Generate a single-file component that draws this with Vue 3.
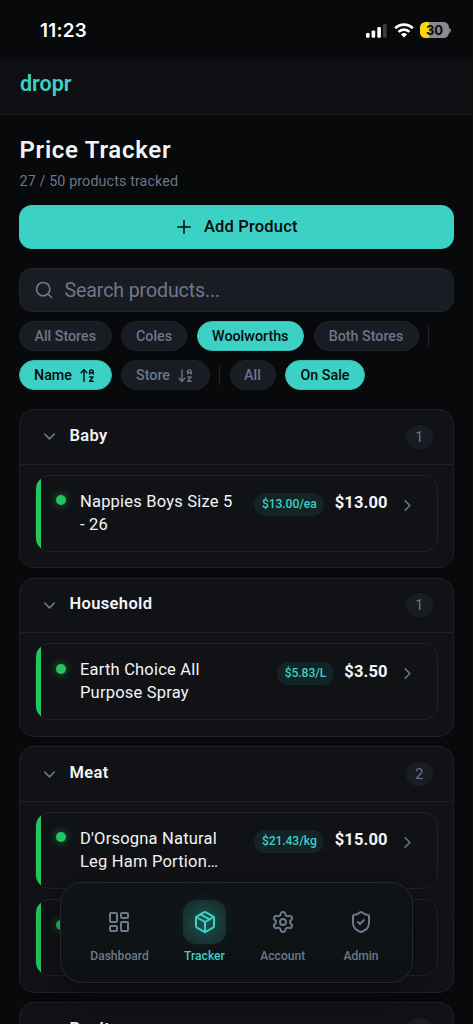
<script setup>
const arrowAZ = {
  up: ['m3 8 4-4 4 4', 'M7 4v16'],
  down: ['m3 16 4 4 4-4', 'M7 20V4'],
}
const letters = ['M20 8h-5', 'M15 10V6.5a2.5 2.5 0 0 1 5 0V10', 'M15 14h5l-5 6h5']

const storeFilters = [
  { label: 'All Stores', cls: 'w-all-stores' },
  { label: 'Coles', cls: 'w-coles' },
  { label: 'Woolworths', cls: 'w-wool', active: true },
  { label: 'Both Stores', cls: 'w-both' },
]

const groups = [
  { name: 'Baby', count: 1, items: [{ lines: ['Nappies Boys Size 5', '- 26'], unit: '$13.00/ea', price: '$13.00' }] },
  { name: 'Household', count: 1, items: [{ lines: ['Earth Choice All', 'Purpose Spray'], unit: '$5.83/L', price: '$3.50' }] },
  {
    name: 'Meat',
    count: 2,
    items: [
      { lines: ["D'Orsogna Natural", 'Leg Ham Portion…'], unit: '$21.43/kg', price: '$15.00' },
      { lines: ['', ''], unit: '', price: '' },
    ],
  },
  { name: 'Poultry', count: 3, items: [] },
]

const tabs = [
  {
    label: 'Dashboard',
    paths: ['M4 3h5a1 1 0 0 1 1 1v7a1 1 0 0 1-1 1H4a1 1 0 0 1-1-1V4a1 1 0 0 1 1-1z', 'M15 3h5a1 1 0 0 1 1 1v3a1 1 0 0 1-1 1h-5a1 1 0 0 1-1-1V4a1 1 0 0 1 1-1z', 'M15 12h5a1 1 0 0 1 1 1v7a1 1 0 0 1-1 1h-5a1 1 0 0 1-1-1v-7a1 1 0 0 1 1-1z', 'M4 16h5a1 1 0 0 1 1 1v3a1 1 0 0 1-1 1H4a1 1 0 0 1-1-1v-3a1 1 0 0 1 1-1z'],
  },
  {
    label: 'Tracker',
    active: true,
    paths: ['M11 21.73a2 2 0 0 0 2 0l7-4A2 2 0 0 0 21 16V8a2 2 0 0 0-1-1.73l-7-4a2 2 0 0 0-2 0l-7 4A2 2 0 0 0 3 8v8a2 2 0 0 0 1 1.73z', 'M12 22V12', 'm3.3 7 8.7 5 8.7-5', 'm7.5 4.27 9 5.15'],
  },
  {
    label: 'Account',
    paths: ['M9.671 4.136a2.34 2.34 0 0 1 4.659 0 2.34 2.34 0 0 0 3.319 1.915 2.34 2.34 0 0 1 2.33 4.033 2.34 2.34 0 0 0 0 3.831 2.34 2.34 0 0 1-2.33 4.033 2.34 2.34 0 0 0-3.319 1.915 2.34 2.34 0 0 1-4.659 0 2.34 2.34 0 0 0-3.32-1.915 2.34 2.34 0 0 1-2.33-4.033 2.34 2.34 0 0 0 0-3.831A2.34 2.34 0 0 1 6.35 6.051a2.34 2.34 0 0 0 3.319-1.915', 'M15 12a3 3 0 1 1-6 0 3 3 0 0 1 6 0z'],
  },
  {
    label: 'Admin',
    paths: ['M20 13c0 5-3.5 7.5-7.66 8.95a1 1 0 0 1-.67-.01C7.5 20.5 4 18 4 13V6a1 1 0 0 1 1-1c2 0 4.5-1.2 6.24-2.72a1.17 1.17 0 0 1 1.52 0C14.51 3.81 17 5 19 5a1 1 0 0 1 1 1z', 'm9 12 2 2 4-4'],
  },
]
</script>

<template>
  <div class="screen">
    <div class="status">
      <span class="time">11:23</span>
      <div class="status-icons">
        <svg class="signal" width="21" height="15" viewBox="0 0 21 15">
          <rect x="0" y="10" width="3.6" height="4.8" rx="1" fill="#fff" />
          <rect x="5.6" y="7.6" width="3.6" height="7.2" rx="1" fill="#fff" />
          <rect x="11.3" y="4" width="3.6" height="10.8" rx="1" fill="#fff" />
          <rect x="17" y="1" width="3.6" height="13.8" rx="1" fill="#3d3e40" />
        </svg>
        <svg class="wifi" width="20" height="15" viewBox="0 0 20 15" fill="none" stroke="#fff" stroke-width="2.7">
          <path d="M1.2 5.3a12.6 12.6 0 0 1 17.6 0" />
          <path d="M4.5 8.9a7.9 7.9 0 0 1 11 0" />
          <path d="M10 14.6 7 11.5a4.3 4.3 0 0 1 6 0z" fill="#fff" stroke="none" />
        </svg>
        <div class="battery"><span>30</span></div>
        <i class="battery-tip"></i>
      </div>
    </div>

    <header class="topbar"><span class="logo">dropr</span></header>

    <main class="content">
      <h1>Price Tracker</h1>
      <p class="sub">27 / 50 products tracked</p>

      <button class="add">
        <svg class="ico" width="18" height="18" viewBox="0 0 24 24"><path d="M3.7 12h16.6M12 3.7v16.6" /></svg>
        <span>Add Product</span>
      </button>

      <div class="search">
        <svg class="ico" width="20" height="20" viewBox="0 0 24 24"><circle cx="11" cy="11" r="8" /><path d="m21 21-4.3-4.3" /></svg>
        <span>Search products...</span>
      </div>

      <div class="chips">
        <span v-for="f in storeFilters" :key="f.label" class="chip" :class="[f.cls, { active: f.active }]">{{ f.label }}</span>
        <i class="sep"></i>
      </div>
      <div class="chips second">
        <span class="chip sort w-name active">Name
          <svg class="ico" width="17" height="17" viewBox="0 0 24 24"><path v-for="d in [...arrowAZ.up, ...letters]" :key="d" :d="d" /></svg>
        </span>
        <span class="chip sort w-store">Store
          <svg class="ico" width="17" height="17" viewBox="0 0 24 24"><path v-for="d in [...arrowAZ.down, ...letters]" :key="d" :d="d" /></svg>
        </span>
        <i class="sep"></i>
        <span class="chip w-any">All</span>
        <span class="chip w-sale active">On Sale</span>
      </div>

      <section v-for="g in groups" :key="g.name" class="card">
        <div class="card-head">
          <svg class="ico chev" width="19" height="19" viewBox="0 0 24 24"><path d="m6 9 6 6 6-6" /></svg>
          <h2>{{ g.name }}</h2>
          <span class="count">{{ g.count }}</span>
        </div>
        <div class="items">
          <article v-for="(it, i) in g.items" :key="i" class="item">
            <i class="dot"></i>
            <div class="name"><div v-for="(l, n) in it.lines" :key="n">{{ l }}</div></div>
            <span v-if="it.unit" class="unit">{{ it.unit }}</span>
            <span v-if="it.price" class="price">{{ it.price }}</span>
            <svg v-if="it.price" class="ico go" width="19" height="19" viewBox="0 0 24 24"><path d="m9 6 6 6-6 6" /></svg>
          </article>
        </div>
      </section>
    </main>

    <nav class="tabbar">
      <div v-for="t in tabs" :key="t.label" class="tab" :class="{ on: t.active }">
        <div class="tab-icon">
          <svg class="ico" width="24" height="24" viewBox="0 0 24 24"><path v-for="d in t.paths" :key="d" :d="d" /></svg>
        </div>
        <span>{{ t.label }}</span>
      </div>
    </nav>
  </div>
</template>

<style>
body {
  background: #08090b;
}
</style>

<style scoped>
.screen {
  position: relative;
  width: 473px;
  height: 1024px;
  overflow: hidden;
  background: #08090b;
  color: #f4f4f6;
  font-family: Roboto, "Liberation Sans", sans-serif;
  box-sizing: border-box;
}
.screen *,
.screen *::before {
  box-sizing: border-box;
}
.ico {
  flex: none;
  display: block;
  fill: none;
  stroke: currentColor;
  stroke-width: 2;
  stroke-linecap: round;
  stroke-linejoin: round;
}
.status {
  height: 57px;
  display: flex;
  justify-content: space-between;
  align-items: center;
  padding: 3px 22px 0 40px;
}
.time {
  margin-top: 2px;
  font: 600 18.8px/22px Inter, sans-serif;
  letter-spacing: 0.3px;
  color: #fff;
}
.status-icons {
  display: flex;
  align-items: center;
}
.wifi {
  margin: 0 6.5px 0 6.5px;
}
.battery {
  width: 29px;
  height: 16px;
  border-radius: 5.5px;
  background: linear-gradient(90deg, #ffd60a 0 9px, #8a8b8d 9px);
  color: #08090b;
  font: 700 13px/16px Inter, sans-serif;
  text-align: center;
}
.battery-tip {
  width: 2px;
  height: 5px;
  border-radius: 0 2px 2px 0;
  background: #77787a;
}
.topbar {
  height: 58px;
  background: #0e0f12;
  border-bottom: 1px solid #1f2024;
  padding: 14px 20px 0;
}
.logo {
  display: block;
  font-size: 21.5px;
  font-weight: 600;
  line-height: 26px;
  color: #3bd1c4;
}
.content {
  padding: 0 19.5px 0 19px;
}
h1 {
  margin: 21px 0 0 0.5px;
  font-size: 24px;
  line-height: 28px;
  font-weight: 600;
  letter-spacing: 0.7px;
}
.sub {
  margin: 7px 0 0 0.5px;
  font-size: 14.3px;
  line-height: 20px;
  letter-spacing: 0.12px;
  color: #6b768a;
}
.add {
  display: flex;
  width: 100%;
  height: 44px;
  margin: 14px 0 0;
  padding: 0 0 1px;
  border: 0;
  border-radius: 13px;
  align-items: center;
  justify-content: center;
  gap: 11px;
  background: #3bd1c4;
  color: #08090b;
  font: 500 16.5px/20px Roboto, sans-serif;
  letter-spacing: 0.18px;
}
.search {
  height: 44px;
  margin-top: 19px;
  padding: 0 14px;
  display: flex;
  align-items: center;
  gap: 10.5px;
  border: 1px solid #22242c;
  border-radius: 13px;
  background: #1a1c23;
  color: #6d788b;
  font-size: 19.6px;
  letter-spacing: -0.12px;
}
.chips {
  display: flex;
  align-items: center;
  gap: 9.5px;
  margin-top: 9px;
}
.chip {
  height: 30px;
  flex: none;
  display: flex;
  align-items: center;
  justify-content: center;
  border: 1px solid #1f2129;
  border-radius: 15px;
  background: #1a1c23;
  color: #6b768a;
  font-size: 14.3px;
  font-weight: 500;
}
.chip.active {
  background: #3bd1c4;
  border-color: #36bdb2;
  color: #08090b;
}
.sort {
  gap: 7.5px;
}
.w-all-stores { width: 92.5px; }
.w-coles { width: 66px; }
.w-wool { width: 107.5px; }
.w-both { width: 105px; }
.w-name { width: 92.5px; }
.w-store { width: 88.5px; }
.w-any { width: 46px; }
.w-sale { width: 80px; }
.sep {
  width: 1px;
  height: 20px;
  background: #22242a;
}
.card {
  margin-top: 9.5px;
  border: 1px solid #1f2128;
  border-radius: 15px;
  background: #111215;
}
.chips + .card {
  margin-top: 19px;
}
.card-head {
  height: 54.5px;
  display: flex;
  align-items: center;
  padding: 0 19.5px 0 20px;
  border-bottom: 1px solid #1f2128;
}
.chev,
.go {
  color: #6b768a;
}
h2 {
  margin: 0 auto 3px 10.5px;
  font-size: 16.5px;
  font-weight: 600;
  letter-spacing: 0.35px;
}
.count {
  width: 27.5px;
  height: 24px;
  border-radius: 12px;
  background: #1a1c23;
  color: #6b768a;
  font-size: 14.3px;
  line-height: 24px;
  text-align: center;
}
.items {
  padding: 10px 15px 15.5px 15px;
  display: flex;
  flex-direction: column;
  gap: 10px;
}
.item {
  position: relative;
  height: 77.2px;
  overflow: hidden;
  display: flex;
  align-items: flex-start;
  padding: 14.5px 20px 0 19.5px;
  border: 1px solid #1f2128;
  border-radius: 14px;
}
.item::before {
  content: "";
  position: absolute;
  left: -1px;
  top: -1px;
  bottom: -1px;
  width: 6px;
  background: #22c55e;
}
.dot {
  width: 10px;
  height: 10px;
  flex: none;
  margin-top: 5px;
  border-radius: 50%;
  background: #22c55e;
  box-shadow: 0 0 9px rgba(34, 197, 94, 0.6);
}
.name {
  margin: -0.5px auto 0 14.5px;
  font-size: 16.5px;
  line-height: 23px;
  letter-spacing: 0.2px;
  white-space: nowrap;
}
.unit {
  height: 23px;
  margin: 3px 10.5px 0 0;
  padding: 0 7.5px;
  border-radius: 12px;
  background: #132326;
  color: #3bd1c4;
  font-size: 12.1px;
  font-weight: 500;
  line-height: 23px;
  letter-spacing: -0.08px;
}
.price {
  font-size: 16.5px;
  line-height: 25px;
  font-weight: 700;
  letter-spacing: 0.15px;
}
.go {
  margin: 5.5px 0 0 9.8px;
}
.tabbar {
  position: absolute;
  left: 60px;
  top: 882px;
  width: 353px;
  height: 100.5px;
  display: flex;
  justify-content: center;
  gap: 34px;
  padding-top: 17px;
  border: 1px solid #25272a;
  border-radius: 22px;
  background: linear-gradient(#101215, #0e1316 50%, #0f1114);
  box-shadow: 0 9px 35px rgba(0, 0, 0, 0.4);
  color: #6d788b;
}
.tab {
  display: flex;
  flex-direction: column;
  align-items: center;
}
.tab-icon {
  width: 43.5px;
  height: 44px;
  display: flex;
  align-items: center;
  justify-content: center;
  border-radius: 13px;
}
.tab span {
  margin-top: 4px;
  font-size: 12.1px;
  font-weight: 500;
  line-height: 16px;
}
.on {
  color: #3bd1c4;
}
.on .tab-icon {
  background: radial-gradient(circle, #1c5551, #17302f 75%);
  box-shadow: 0 0 20px rgba(59, 209, 196, 0.07);
}
</style>
